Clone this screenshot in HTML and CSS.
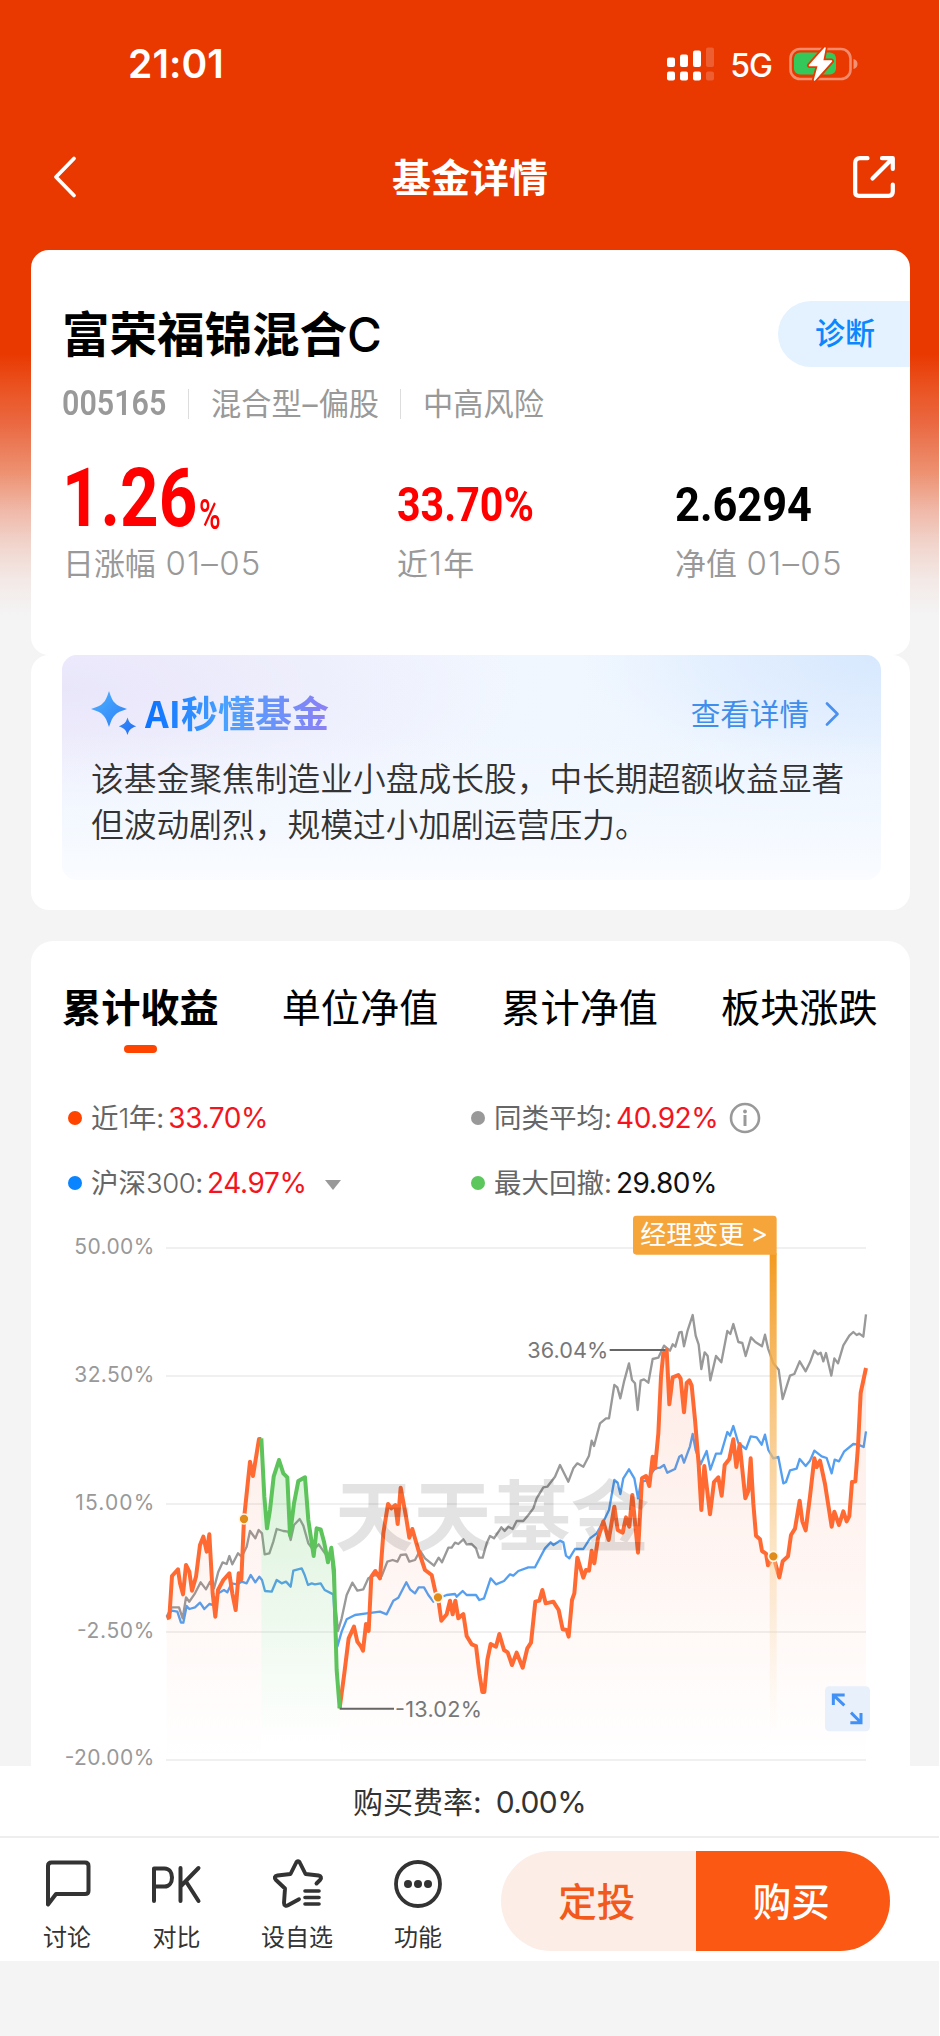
FILE: index.html
```html
<!DOCTYPE html>
<html lang="zh-CN">
<head>
<meta charset="utf-8">
<title>基金详情</title>
<link rel="stylesheet" href="styles.css">
</head>
<body>
<div class="page">
  <header class="status">
    <span class="clock">21:01</span>
    <span class="status-right">
      <svg class="signal" width="50" height="34" viewBox="0 0 50 34" fill="#fff">
        <rect x="1" y="10.5" width="8" height="9.5" rx="2"/><rect x="14" y="7.500" width="8" height="12.500" rx="2"/><rect x="27" y="3.500" width="8" height="16.500" rx="2"/><rect x="40" y="0.500" width="8" height="19.500" rx="2" opacity=".2"/>
        <rect x="1" y="24.500" width="8" height="9" rx="2"/><rect x="14" y="24.500" width="8" height="9" rx="2"/><rect x="27" y="24.500" width="8" height="9" rx="2"/><rect x="40" y="24.500" width="8" height="9" rx="2" opacity=".2"/>
      </svg>
      <span class="net">5G</span>
      <svg class="battery" width="70" height="36" viewBox="0 0 70 36">
        <rect x="1.500" y="3" width="60" height="30" rx="9.500" fill="none" stroke="#fff" stroke-opacity=".42" stroke-width="2.600"/>
        <path d="M64.500 13c3 .8 4 3 4 5s-1 4.200-4 5z" fill="#fff" fill-opacity=".45"/>
        <rect x="5" y="6.500" width="42" height="22" rx="6" fill="#34c759"/>
        <path d="M36 2 20.500 19.500h9L25.500 34 42.500 15h-9z" fill="#fff" stroke="#e93800" stroke-width="5" stroke-linejoin="round"/>
        <path d="M36 2 20.500 19.500h9L25.500 34 42.500 15h-9z" fill="#fff" stroke="#fff" stroke-width="1.500" stroke-linejoin="round"/>
      </svg>
    </span>
  </header>

  <nav class="nav">
    <svg class="back" width="26" height="44" viewBox="0 0 26 44"><path d="M22 3.500 4 22l18 18.500" fill="none" stroke="#fff" stroke-width="3.800" stroke-linecap="round" stroke-linejoin="round"/></svg>
    <h1>基金详情</h1>
    <svg class="share" width="46" height="46" viewBox="0 0 46 46" fill="none" stroke="#fff" stroke-width="4.200" stroke-linecap="round" stroke-linejoin="round"><path d="M16.500 4.200H9Q4.200 4.200 4.200 9v29.500Q4.200 41.800 8 41.800h29.500q4.300 0 4.300-4.300v-7M31 4.200h10.800V15M40.500 5.500 21.500 24.500"/></svg>
  </nav>

  <section class="card summary">
    <div class="fund-head">
      <h2>富荣福锦混合<span class="latin">C</span></h2>
      <a class="diagnose">诊断</a>
    </div>
    <div class="meta">
      <b class="din code">005165</b><i></i><span class="type">混合型<em>–</em>偏股</span><i></i><span>中高风险</span>
    </div>
    <div class="stats">
      <div class="stat first"><div class="value up"><span class="din big">1.26</span><span class="din pct">%</span></div><div class="label">日涨幅 <em>01–05</em></div></div>
      <div class="stat second"><div class="value up"><span class="din mid">33.70%</span></div><div class="label">近<em>1</em>年</div></div>
      <div class="stat"><div class="value"><span class="din nav-value">2.6294</span></div><div class="label">净值 <em>01–05</em></div></div>
    </div>
  </section>

  <section class="card ai">
    <div class="ai-panel">
      <div class="ai-head">
        <svg width="46" height="46" viewBox="0 0 46 46"><defs><linearGradient id="spark" x1="0" y1="0" x2="1" y2="1"><stop offset="0" stop-color="#50b4ff"/><stop offset="1" stop-color="#2370f5"/></linearGradient></defs><path d="M18 0C20 6 21.500 10 24 12 26 14.500 30 16 36 18 30 20 26 21.500 24 24 21.500 26 20 30 18 36 16 30 14.500 26 12 24 10 21.500 6 20 0 18 6 16 10 14.500 12 12 14.500 10 16 6 18 0zM36.500 26.500c1.500 4.500 2.500 6.500 8.800 8.800-6.300 2.300-7.300 4.300-8.800 8.700-1.500-4.400-2.500-6.400-8.800-8.700 6.300-2.300 7.300-4.300 8.800-8.800z" fill="url(#spark)"/></svg>
        <strong>AI秒懂基金</strong>
        <a>查看详情</a>
        <svg class="go" width="15" height="26" viewBox="0 0 15 26"><path d="M2 2.500 12.500 13 2 23.500" fill="none" stroke="#4a90f0" stroke-width="2.700" stroke-linecap="round" stroke-linejoin="round"/></svg>
      </div>
      <p>该基金聚焦制造业小盘成长股，中长期超额收益显著<br>但波动剧烈，规模过小加剧运营压力。</p>
    </div>
  </section>

  <section class="card performance">
    <div class="tabs"><span class="active">累计收益</span><span>单位净值</span><span>累计净值</span><span>板块涨跌</span></div>
    <div class="legend">
      <div class="item"><i class="dot orange"></i><span class="name">近<em>1</em>年:</span><span class="num red">33.70%</span></div>
      <div class="item"><i class="dot gray"></i><span class="name">同类平均:</span><span class="num red">40.92%</span>
        <svg class="info" width="32" height="32" viewBox="0 0 32 32"><circle cx="16" cy="16" r="14" fill="none" stroke="#999" stroke-width="2.600"/><circle cx="16" cy="9.500" r="1.900" fill="#999"/><path d="M16 13v11" stroke="#999" stroke-width="3"/></svg></div>
      <div class="item"><i class="dot blue"></i><span class="name">沪深<em>300</em>:</span><span class="num red">24.97%</span><i class="caret"></i></div>
      <div class="item"><i class="dot green"></i><span class="name">最大回撤:</span><span class="num">29.80%</span></div>
    </div>
    <!-- Chart units: three per pixel, x measured from the left page edge. -->
    <svg class="chart" width="879" height="561" viewBox="93 0 2637 1683">
      <defs>
        <linearGradient id="fillOrange" gradientUnits="userSpaceOnUse" x1="0" y1="435" x2="0" y2="1665"><stop offset="0" stop-color="#fa5a28" stop-opacity=".12"/><stop offset="1" stop-color="#fa5a28" stop-opacity="0"/></linearGradient>
        <linearGradient id="fillGreen" gradientUnits="userSpaceOnUse" x1="0" y1="702" x2="0" y2="1620"><stop offset="0" stop-color="#55c455" stop-opacity=".24"/><stop offset="1" stop-color="#55c455" stop-opacity="0"/></linearGradient>
        <linearGradient id="beam" x1="0" y1="0" x2="0" y2="1"><stop offset="0" stop-color="#f39a1f"/><stop offset=".5" stop-color="#f8c47c" stop-opacity=".65"/><stop offset="1" stop-color="#fbe0bb" stop-opacity="0"/></linearGradient>
      </defs>
      <path d="M498 129H2598M498 513H2598M498 897H2598M498 1281H2598M498 1665H2598" stroke="#ebebeb" stroke-width="5"/>
      <g class="axis" text-anchor="end">
        <text x="463" y="146" textLength="240">50.00%</text><text x="463" y="530" textLength="240">32.50%</text><text x="463" y="914" textLength="237">15.00%</text><text x="463" y="1298" textLength="232">-2.50%</text><text x="463" y="1681" textLength="269">-20.00%</text>
      </g>
      <path fill="none" stroke="#999" stroke-width="7" stroke-linejoin="round" d="M500 1235 515 1207 537 1207 548 1240 558 1177 568 1190 585 1165 602 1132 618 1153 630 1130 642 1150 655 1100 668 1072 680 1077 688 1053 697 1078 714 1045 725 1055 740 1025 750 978 766 1000 776 975 786 985 794 1048 808 1045 820 1010 830 972 850 978 865 980 872 1005 882 960 899 942 910 962 925 1015 940 1035 956 1018 975 1045 995 1055 1005 1185 1014 1278 1025 1240 1040 1170 1057 1133 1072 1157 1090 1153 1105 1120 1125 1110 1145 1113 1162 1070 1178 1065 1192 1070 1202 1050 1218 1048 1228 1070 1245 1065 1260 1037 1275 1060 1302 1082 1316 1058 1326 1072 1345 1028 1355 1028 1365 1013 1375 1017 1390 1003 1400 1018 1415 1017 1428 1030 1437 1058 1448 1058 1460 1015 1470 993 1482 1000 1504 967 1514 978 1525 965 1538 972 1550 948 1570 948 1585 930 1600 910 1610 880 1630 847 1642 845 1665 815 1680 780 1705 830 1720 790 1732 775 1750 785 1767 752 1775 707 1782 723 1800 655 1818 640 1827 640 1843 540 1852 547 1861 580 1872 530 1887 475 1896 525 1905 535 1913 615 1922 527 1932 523 1945 533 1958 462 1975 458 1992 422 2010 437 2018 418 2026 425 2038 382 2045 381 2052 424 2063 376 2078 330 2087 392 2096 419 2104 492 2114 442 2123 453 2131 526 2148 453 2164 472 2182 378 2191 387 2200 357 2215 411 2227 414 2237 453 2253 397 2266 411 2286 424 2295 389 2304 430 2320 475 2336 494 2348 582 2370 512 2383 507 2399 469 2417 499 2430 472 2443 437 2454 448 2462 443 2470 469 2478 444 2494 512 2503 460 2514 475 2530 421 2548 392 2560 381 2570 390 2578 386 2590 395 2598 328"/>
      <path fill="none" stroke="#559ff0" stroke-width="7" stroke-linejoin="round" d="M500 1237 515 1217 532 1220 543 1253 550 1253 560 1203 568 1212 585 1207 600 1193 613 1212 628 1197 640 1200 655 1165 672 1155 682 1162 695 1135 712 1138 725 1130 740 1135 752 1110 766 1132 778 1115 786 1125 795 1158 815 1160 830 1125 845 1135 858 1130 872 1145 880 1097 905 1090 914 1110 924 1140 935 1135 945 1138 962 1135 974 1155 1000 1168 1006 1275 1012 1325 1025 1280 1040 1243 1065 1230 1100 1225 1140 1220 1160 1228 1180 1187 1195 1178 1207 1155 1219 1132 1230 1153 1245 1165 1256 1147 1272 1147 1285 1170 1300 1190 1314 1180 1340 1170 1365 1167 1370 1175 1388 1158 1400 1170 1428 1170 1438 1185 1452 1180 1462 1150 1472 1120 1488 1138 1512 1128 1530 1108 1540 1112 1555 1098 1585 1087 1605 1087 1620 1058 1635 1030 1652 1012 1660 1020 1680 1007 1690 1012 1698 1052 1708 1060 1725 1032 1750 1032 1770 1000 1790 985 1810 950 1827 915 1843 825 1853 833 1861 867 1870 820 1887 793 1903 820 1914 880 1923 830 1940 827 1965 790 1980 788 1992 780 2002 803 2025 792 2038 755 2045 751 2052 773 2070 724 2078 687 2087 735 2102 778 2120 738 2131 794 2148 746 2163 746 2182 681 2190 692 2200 663 2215 714 2238 732 2252 694 2270 697 2285 719 2295 689 2305 735 2320 760 2335 756 2350 835 2358 831 2370 796 2390 791 2399 762 2417 783 2430 767 2443 737 2465 754 2480 759 2495 805 2504 764 2517 769 2532 740 2560 717 2575 719 2591 726 2598 679"/>
      <path fill="url(#fillOrange)" d="M500 1665V1240L508 1237 516 1113 534 1093 540 1135 549 1168 558 1080 568 1100 576 1157 588 1115 600 1020 610 995 620 1040 628 988 638 1165 646 1235 654 1155 670 1125 688 1105 697 1165 707 1215 716 1105 724 1123 732 942 750 770 759 813 777 702 784 702V1665z"/>
      <path fill="url(#fillGreen)" d="M784 1620V702L793 875 801 970 810 915 821 815 837 765 850 805 862 817 870 990 882 895 895 828 915 817 925 945 941 1053 950 970 962 973 972 1010 984 1072 994 1028 1002 1095 1006 1255 1010 1395 1019 1510V1620z"/>
      <path fill="url(#fillOrange)" d="M1019 1665V1510L1033 1405 1046 1300 1062 1265 1072 1310 1083 1325 1089 1337 1098 1257 1106 1278 1114 1115 1126 1098 1140 1120 1150 985 1164 897 1174 910 1186 900 1193 957 1202 848 1218 935 1228 998 1237 972 1255 1035 1275 1095 1295 1110 1306 1160 1314 1177 1324 1247 1340 1228 1350 1187 1358 1228 1366 1187 1375 1240 1390 1227 1400 1293 1415 1318 1428 1323 1438 1405 1447 1461 1453 1461 1462 1365 1472 1317 1488 1325 1498 1287 1512 1335 1523 1342 1536 1380 1550 1343 1568 1388 1582 1330 1593 1313 1606 1190 1618 1187 1627 1155 1637 1195 1660 1190 1676 1215 1688 1273 1700 1275 1706 1295 1716 1185 1723 1165 1732 1058 1750 1118 1758 1095 1767 1097 1775 1037 1783 1075 1794 1000 1810 950 1826 1005 1843 905 1853 975 1868 983 1878 937 1888 965 1897 870 1914 1043 1926 820 1938 813 1948 843 1958 755 1965 790 1975 685 1983 515 1990 445 2000 435 2008 598 2018 517 2035 510 2042 521 2052 622 2060 534 2068 526 2075 542 2085 644 2096 778 2104 915 2113 783 2130 928 2142 831 2155 817 2165 872 2174 780 2188 762 2200 703 2209 786 2219 717 2236 880 2245 858 2252 760 2260 896 2268 992 2280 1003 2286 1038 2298 1046 2304 1081 2320 1054 2338 1117 2348 1069 2364 1054 2373 990 2385 971 2399 887 2407 949 2417 976 2430 874 2443 760 2450 786 2460 767 2475 837 2495 965 2503 920 2517 960 2530 919 2540 949 2548 933 2556 831 2566 829 2574 724 2582 564 2598 489V1665z"/>
      <g fill="none" stroke="#ff6a33" stroke-width="12" stroke-linejoin="round">
        <path d="M500 1240 508 1237 516 1113 534 1093 540 1135 549 1168 558 1080 568 1100 576 1157 588 1115 600 1020 610 995 620 1040 628 988 638 1165 646 1235 654 1155 670 1125 688 1105 697 1165 707 1215 716 1105 724 1123 732 942 750 770 759 813 777 702 784 702"/>
        <path d="M1019 1510 1033 1405 1046 1300 1062 1265 1072 1310 1083 1325 1089 1337 1098 1257 1106 1278 1114 1115 1126 1098 1140 1120 1150 985 1164 897 1174 910 1186 900 1193 957 1202 848 1218 935 1228 998 1237 972 1255 1035 1275 1095 1295 1110 1306 1160 1314 1177 1324 1247 1340 1228 1350 1187 1358 1228 1366 1187 1375 1240 1390 1227 1400 1293 1415 1318 1428 1323 1438 1405 1447 1461 1453 1461 1462 1365 1472 1317 1488 1325 1498 1287 1512 1335 1523 1342 1536 1380 1550 1343 1568 1388 1582 1330 1593 1313 1606 1190 1618 1187 1627 1155 1637 1195 1660 1190 1676 1215 1688 1273 1700 1275 1706 1295 1716 1185 1723 1165 1732 1058 1750 1118 1758 1095 1767 1097 1775 1037 1783 1075 1794 1000 1810 950 1826 1005 1843 905 1853 975 1868 983 1878 937 1888 965 1897 870 1914 1043 1926 820 1938 813 1948 843 1958 755 1965 790 1975 685 1983 515 1990 445 2000 435 2008 598 2018 517 2035 510 2042 521 2052 622 2060 534 2068 526 2075 542 2085 644 2096 778 2104 915 2113 783 2130 928 2142 831 2155 817 2165 872 2174 780 2188 762 2200 703 2209 786 2219 717 2236 880 2245 858 2252 760 2260 896 2268 992 2280 1003 2286 1038 2298 1046 2304 1081 2320 1054 2338 1117 2348 1069 2364 1054 2373 990 2385 971 2399 887 2407 949 2417 976 2430 874 2443 760 2450 786 2460 767 2475 837 2495 965 2503 920 2517 960 2530 919 2540 949 2548 933 2556 831 2566 829 2574 724 2582 564 2598 489"/>
      </g>
      <path fill="none" stroke="#5cc45a" stroke-width="12" stroke-linejoin="round" d="M784 700 793 875 801 970 810 915 821 815 837 765 850 805 862 817 870 990 882 895 895 828 915 817 925 945 941 1053 950 970 962 973 972 1010 984 1072 994 1028 1002 1095 1006 1255 1010 1395 1019 1510"/>
      <text class="watermark" x="1004" y="1021" textLength="944" lengthAdjust="spacingAndGlyphs">天天基金</text>
      <path d="M1829 435H1996M1019 1511H1182" stroke="#666" stroke-width="6"/>
      <g class="mark"><text x="1582" y="458" textLength="243">36.04%</text><text x="1185" y="1535" textLength="261">-13.02%</text></g>
      <rect x="2309" y="145" width="21" height="1440" fill="url(#beam)"/>
      <path d="M1909 32h411q10 0 10 10v107h-421q-10 0-10-10V42q0-10 10-10z" fill="#f6a53b"/>
      <text class="flag" x="1921" y="117" textLength="312">经理变更</text><text class="flag" x="2252" y="115">&gt;</text>
      <g fill="#e08c1a" stroke="#fff6e8" stroke-width="5"><circle cx="732" cy="942" r="15"/><circle cx="1314" cy="1177" r="15"/><circle cx="2320" cy="1054" r="15"/></g>
      <rect x="2475" y="1444" width="135" height="135" rx="13" fill="#e8f0fb"/>
      <path d="M2500 1500v-30h34M2502 1472l31 29M2583 1524v29h-32M2581 1551l-28-28" fill="none" stroke="#4090f5" stroke-width="9"/>
    </svg>
  </section>

  <footer class="bottom">
    <div class="fee">购买费率:<span>0.00%</span></div>
    <div class="bar">
      <div class="action discuss"><svg width="50" height="54" viewBox="0 0 50 54"><path d="M6 47.500V9q0-3.500 3.500-3.500h33.500q3.500 0 3.500 3.500v25q0 3-3.500 3H14z" fill="none" stroke="#333" stroke-width="4" stroke-linejoin="round"/></svg><span>讨论</span></div>
      <div class="action compare"><svg width="54" height="54" viewBox="0 0 54 54"><path d="M4 44V11.500h10.500c10 0 10 18 0 18H4M30.500 11v33M48.500 11 31 29M36 24.500 48.500 44" fill="none" stroke="#333" stroke-width="4" stroke-linecap="round" stroke-linejoin="round"/></svg><span>对比</span></div>
      <div class="action favourite"><svg width="54" height="54" viewBox="0 0 54 54"><path d="M46.500 26.500 50 23c2-2 1-4-1.500-4.500L35.500 17 30 6c-1-2.500-3-2.500-4 0l-5.500 11-13 1.500c-3 .5-3.500 2.500-1.500 4.500l9 8.500-1 14.500c0 2.500 2 3.300 4 2.300l11-6" fill="none" stroke="#333" stroke-width="3.900" stroke-linecap="round" stroke-linejoin="round"/><path d="M35 34h14M35 40.500h14M35 47h14" stroke="#333" stroke-width="3.600" stroke-linecap="round"/></svg><span>设自选</span></div>
      <div class="action more"><svg width="54" height="54" viewBox="0 0 54 54"><circle cx="27" cy="27" r="22" fill="none" stroke="#333" stroke-width="3.800"/><g fill="#333"><circle cx="17" cy="27" r="4"/><circle cx="27" cy="27" r="4"/><circle cx="37" cy="27" r="4"/></g></svg><span>功能</span></div>
      <div class="buttons"><a class="plan">定投</a><a class="buy">购买</a></div>
    </div>
  </footer>
</div>
</body>
</html>
```
FILE: styles.css
```css
* { box-sizing: border-box; }
body { margin: 0; background: #fff; font-family: Inter, "Noto Sans CJK SC", sans-serif; color: #000; }
h1, h2, p { margin: 0; }
em, i { font-style: normal; }
svg { display: block; flex: none; }
.page { width: 939px; height: 2036px; overflow: hidden; background: linear-gradient(#e93800 353px, #ea5322 388px, #ea6841 423px, #ed9272 473px, #f0b8a8 510px, #f1d5cd 545px, #f3e9e6 580px, #f4f4f4 615px) #f4f4f4; }

.status { height: 128px; padding: 0 80px 0 128px; display: flex; align-items: center; justify-content: space-between; color: #fff; }
.clock { font-size: 39px; font-weight: 600; line-height: 48px; letter-spacing: .1px; }
.status-right { display: flex; align-items: center; }
.net { margin: 3px 17px 0 14px; font-size: 32px; font-weight: 500; line-height: 36px; letter-spacing: -1px; }

.nav { height: 122px; padding: 0 42px 24px 52px; display: flex; align-items: center; justify-content: space-between; color: #fff; }
.nav h1 { font-size: 39px; font-weight: 700; line-height: 50px; margin-left: 11px; padding-top: 1px; }

.card { margin: 0 29px 0 31px; width: 879px; background: #fff; border-radius: 18px; }
.summary { height: 405px; padding-top: 51px; }
.fund-head { height: 66px; padding-left: 31px; display: flex; align-items: center; justify-content: space-between; }
.fund-head h2 { font-size: 47.500px; font-weight: 600; line-height: 60px; padding-top: 2px; }
.latin { font-weight: 500; }
.diagnose { width: 132px; height: 66px; padding-left: 37px; border-radius: 33px 0 0 33px; background: #e3f2fe; color: #0a86ff; font-size: 30px; line-height: 65px; font-weight: 500; }
.meta { height: 74px; padding-left: 31px; display: flex; align-items: center; color: #999; font-size: 30.200px; line-height: 36px; }
.meta i { width: 1px; height: 30px; margin: 0 22px; background: #ddd; }
.type { margin-right: -1px; }
.type em { letter-spacing: 1px; margin-left: 1px; }
.din { font-family: Roboto, "Noto Sans CJK SC", sans-serif; display: inline-block; transform-origin: 0 50%; font-weight: 700; }
.code { width: 104px; font-size: 35px; transform: scaleX(.87); color: #999; white-space: nowrap; font-weight: 600; }
.stats { display: flex; padding-left: 32px; }
.stat.first { width: 334px; }
.stat.second { width: 278px; }
.value { height: 98px; display: flex; white-space: nowrap; }
.up { color: #f00; }
.big { width: 137px; margin: 11px 0 0 -1px; font-size: 81px; line-height: 94px; transform: scaleX(.83); }
.pct { width: 24px; margin-top: 49px; font-size: 42px; line-height: 50px; transform: scaleX(.7); font-weight: 500; }
.mid { font-size: 49px; line-height: 56px; margin-top: 36px; transform: scaleX(.84); }
.nav-value { font-size: 49px; line-height: 56px; margin-top: 36px; transform: scaleX(.885); }
.label { font-size: 30.900px; line-height: 44px; margin-top: 2px; color: #999; white-space: nowrap; }
.label em { font-weight: 300; font-size: 33px; letter-spacing: 1.300px; margin-left: 1px; }

.ai { height: 255px; padding: 0 31px; }
.ai-panel { height: 225px; width: 819px; padding: 34px 0 0 29px; border-radius: 15px; background: linear-gradient(rgba(244, 249, 255, 0) 35%, rgba(244, 249, 255, .9) 75%, #fafcff 100%), radial-gradient(ellipse 300px 120px at 100% 0, #d7e8fe, transparent), radial-gradient(ellipse 460px 150px at 0 15%, #e9e6fa, transparent), linear-gradient(100deg, #f3f5fe, #f1f7ff 60%, #eaf3ff); }
.ai-head { display: flex; align-items: center; height: 50px; }
.ai-head strong { margin: -4px 0 0 8px; font-family: "Noto Sans CJK SC", sans-serif; font-size: 37px; line-height: 48px; font-weight: 700; color: transparent; background: linear-gradient(90deg, #0f76ff 5%, #4ba2ff 45%, #8d80f4); background-clip: text; }
.ai-head a { margin: -4px 0 0 auto; font-size: 29.600px; color: #3f8eec; }
.go { margin: 0 41px 0 16px; }
.ai-panel p { margin-top: 17px; font-size: 32.750px; line-height: 46px; color: #333; white-space: nowrap; font-weight: 350; }

.performance { height: 825px; margin-top: 31px; border-radius: 22px 22px 0 0; }
.tabs { height: 113px; padding: 39px 32px 0 31px; display: flex; justify-content: space-between; font-size: 39.200px; line-height: 56px; }
.tabs span { width: 157px; }
.active { font-weight: 700; }
.active::after { content: ""; display: block; width: 33px; height: 8px; margin: 9px auto 0; border-radius: 4px; background: #ff4400; }
.legend { height: 151px; padding: 31px 0 0 37px; display: grid; grid-template-columns: 403px 1fr; grid-auto-rows: 65px; }
.item { display: flex; align-items: center; height: 66px; font-size: 27.500px; line-height: 34px; color: #666; }
.dot { width: 14px; height: 14px; margin-right: 9px; border-radius: 50%; }
.orange { background: #ff4400; } .gray { background: #999; } .blue { background: #0a84ff; } .green { background: #5cc75c; }
.name em { font-weight: 300; letter-spacing: -.5px; }
.num { margin-left: 4px; width: 99px; font-size: 28px; letter-spacing: -.4px; color: #111; white-space: nowrap; }
.red { color: #f5141e; }
.info { margin-left: 14px; }
.caret { margin: 4px 0 0 19px; border: 8px solid transparent; border-top: 10px solid #999; border-bottom: 0; }
.chart { overflow: visible; }
.axis { fill: #999; font-size: 63px; }
.mark { fill: #777; font-size: 65px; }
.watermark { fill: #000; fill-opacity: .11; font-size: 232px; font-weight: 700; }
.flag { fill: #fff; font-size: 78px; }

.bottom { height: 195px; background: #fff; }
.fee { height: 72px; display: flex; justify-content: center; font-size: 30px; line-height: 72px; color: #333; border-bottom: 2px solid #eee; }
.fee span { margin-left: 14px; letter-spacing: -.6px; }
.bar { height: 123px; display: flex; padding-left: 23px; }
.action { display: flex; flex-direction: column; align-items: center; font-size: 24px; line-height: 32px; color: #333; padding-top: 19px; width: 88px; }
.action svg { margin-bottom: 11px; }
.compare { margin-left: 22px; width: 87px; }
.favourite { margin-left: 33px; }
.more { margin-left: 33px; }
.buttons { display: flex; margin: 13px 0 0 39px; width: 389px; height: 100px; border-radius: 50px; overflow: hidden; }
.buttons a { flex: 1; padding-right: 3px; text-align: center; font-size: 38.500px; font-weight: 500; line-height: 103px; }
.plan { background: #fcede6; color: #f2591c; }
.buy { background: #fb5913; color: #fff; }
```
